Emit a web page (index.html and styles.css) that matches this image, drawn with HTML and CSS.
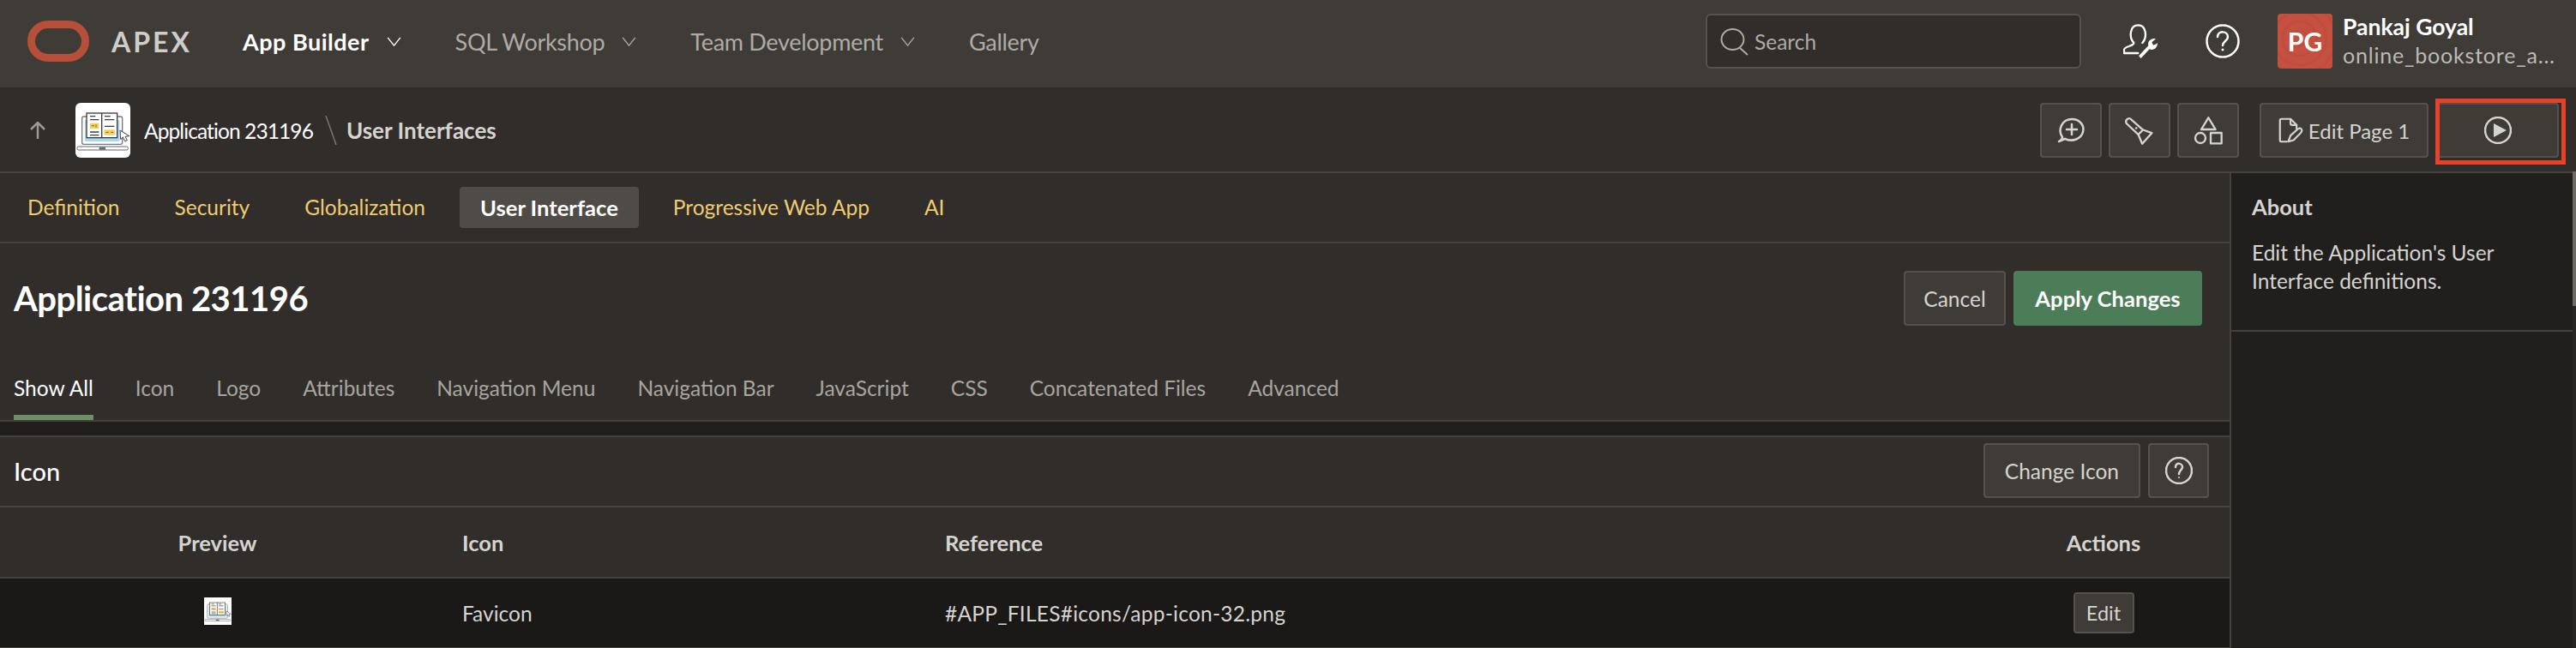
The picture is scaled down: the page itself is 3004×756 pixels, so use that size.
FILE: index.html
```html
<!DOCTYPE html>
<html lang="en">
<head>
    <meta charset="UTF-8">
    <title>User Interfaces</title>
    <link rel="stylesheet" href="styles.css">
</head>
<body>
<svg class="defs" width="0" height="0">
    <symbol id="appIcon" viewBox="264 360 192 192">
        <rect x="287" y="408" width="141" height="97" rx="6" fill="#fff" stroke="#77787a" stroke-width="4"/>
        <rect x="297" y="420" width="121" height="75" fill="#a9d8f3"/>
        <rect x="303" y="396" width="107" height="86" fill="#fff" stroke="#3c3d40" stroke-width="4"/>
        <path d="M356 396V482" stroke="#3c3d40" stroke-width="4"/>
        <path d="M315 407H334M315 419H346M315 462H346M315 473H346M366 407H386M366 419H400M366 442H400" stroke="#3c3d40" stroke-width="4"/>
        <rect x="315" y="431" width="31" height="19" fill="#f8cf5e"/>
        <rect x="364" y="454" width="38" height="19" fill="#f8cf5e"/>
        <path d="M320 440H330M336 436V446M370 463H380M388 463H396" stroke="#77693a" stroke-width="3"/>
        <rect x="270" y="513" width="178" height="12" rx="5" fill="#fff" stroke="#66676a" stroke-width="3"/>
        <rect x="347" y="515" width="22" height="9" fill="#66676a"/>
        <path d="M420 456L452 476L438 478L445 491L437 494L430 480L422 488Z" fill="#fff" stroke="#3c3d40" stroke-width="3"/>
    </symbol>
</svg>

<header class="topbar">
    <svg class="logo" viewBox="0 0 72 48"><rect x="4.500" y="4.500" width="63" height="39" rx="19.500" fill="none" stroke="#b84f3a" stroke-width="9"/></svg>
    <span class="brand">APEX</span>
    <nav class="topnav">
        <a class="topnav-item active">App Builder <svg class="chevron" viewBox="0 0 18 12"><path d="M1 1L9 11L17 1"/></svg></a>
        <a class="topnav-item">SQL Workshop <svg class="chevron" viewBox="0 0 18 12"><path d="M1 1L9 11L17 1"/></svg></a>
        <a class="topnav-item">Team Development <svg class="chevron" viewBox="0 0 18 12"><path d="M1 1L9 11L17 1"/></svg></a>
        <a class="topnav-item">Gallery</a>
    </nav>
    <div class="search">
        <svg class="search-icon" viewBox="0 0 33 32"><ellipse cx="14.500" cy="13" rx="13" ry="12"/><path d="M23 23L32 31"/></svg>
        <span>Search</span>
    </div>
    <svg class="top-icon admin" viewBox="0 0 120 120">
        <path d="M37 66C20 48 22 4 52 4C82 4 84 48 67 66M37 66C37 78 4 78 3 90V102H52"/>
        <path class="solid" d="M54 112L88 76C84 60 98 48 114 52L100 64L105 74L116 70L120 66C120 84 106 94 92 88L62 120Z"/>
    </svg>
    <svg class="top-icon help" viewBox="0 0 40 40">
        <circle cx="20" cy="20" r="18.500"/>
        <path d="M14 15C14 7 26 8 26 15C26 20 20 20 20 25"/>
        <circle class="dot" cx="20" cy="30" r="1.500"/>
    </svg>
    <div class="avatar">PG</div>
    <div class="user">
        <div class="user-name">Pankaj Goyal</div>
        <div class="user-app">online_bookstore_a...</div>
    </div>
</header>

<section class="crumbbar">
    <svg class="up-arrow" viewBox="0 0 18 20"><path d="M9 20V2M1 9L9 1L17 9"/></svg>
    <svg class="app-icon"><use href="#appIcon"/></svg>
    <span class="crumb">Application 231196</span>
    <svg class="crumb-sep" viewBox="0 0 14 34"><path d="M1 0L13 34"/></svg>
    <span class="crumb-current">User Interfaces</span>
    <div class="crumb-actions">
        <button class="btn btn-icon">
            <svg class="ico ico-comment" viewBox="0 0 34 30"><path d="M7 23C1 14 7 2 18 2C28 2 33 10 31 17C29 25 19 29 10 25L3 28C5 27 7 25 7 23Z"/><path d="M18 8V20M12 14H24"/></svg>
        </button>
        <button class="btn btn-icon">
            <svg class="ico ico-wide ico-torch" viewBox="110 370 115 110"><path d="M120 396Q118 386 128 382Q134 380 138 385L180 422L211 433L177 471L163 438L122 400Z"/><path d="M180 422L163 438"/><circle class="dot" cx="156" cy="416" r="4"/></svg>
        </button>
        <button class="btn btn-icon">
            <svg class="ico ico-wide ico-shapes" viewBox="355 375 105 102"><path d="M407 382L382 423H432Z"/><circle cx="379" cy="453" r="18"/><rect x="415" y="435" width="38" height="37"/></svg>
        </button>
        <button class="btn btn-edit">
            <svg class="ico ico-doc" viewBox="0 0 34 32"><path d="M11 31H4Q2 31 2 29V3Q2 1 4 1H16L24 9V14"/><path d="M16 2V7Q16 9 18 9H23"/><path d="M13 31L16 23L26 14Q30 12 31 16Q31 18 29 20L20 29Z"/></svg>
            Edit Page 1
        </button>
        <button class="btn btn-run">
            <svg class="ico ico-run" viewBox="0 0 32 32"><circle cx="16" cy="16" r="15"/><path class="solid" d="M11 8L26 16L11 24Z"/></svg>
        </button>
    </div>
    <div class="highlight"></div>
</section>

<div class="workspace">
    <main class="content">
        <nav class="tabs">
            <a class="tab">Definition</a>
            <a class="tab">Security</a>
            <a class="tab">Globalization</a>
            <a class="tab active">User Interface</a>
            <a class="tab">Progressive Web App</a>
            <a class="tab">AI</a>
        </nav>
        <div class="titlebar">
            <h1>Application 231196</h1>
            <div class="title-actions">
                <button class="btn btn-text btn-cancel">Cancel</button>
                <button class="btn btn-primary">Apply Changes</button>
            </div>
        </div>
        <nav class="subtabs">
            <a class="subtab active">Show All</a>
            <a class="subtab">Icon</a>
            <a class="subtab">Logo</a>
            <a class="subtab">Attributes</a>
            <a class="subtab">Navigation Menu</a>
            <a class="subtab">Navigation Bar</a>
            <a class="subtab">JavaScript</a>
            <a class="subtab">CSS</a>
            <a class="subtab">Concatenated Files</a>
            <a class="subtab">Advanced</a>
        </nav>
        <section class="region">
            <div class="region-head">
                <h2>Icon</h2>
                <button class="btn btn-text">Change Icon</button>
                <button class="btn btn-help">
                    <svg class="ico ico-help" viewBox="0 0 32 32"><circle cx="16" cy="16" r="15"/><path d="M12 12C12 6 20 7 20 12C20 15 16 16 16 20"/><circle class="dot" cx="16" cy="24" r="1"/></svg>
                </button>
            </div>
            <table class="report">
                <thead>
                <tr>
                    <th class="col-preview">Preview</th>
                    <th class="col-icon">Icon</th>
                    <th class="col-ref">Reference</th>
                    <th class="col-actions">Actions</th>
                </tr>
                </thead>
                <tbody>
                <tr>
                    <td class="col-preview"><svg class="favicon"><use href="#appIcon"/></svg></td>
                    <td class="col-icon">Favicon</td>
                    <td class="col-ref">#APP_FILES#icons/app-icon-32.png</td>
                    <td class="col-actions"><button class="btn btn-small">Edit</button></td>
                </tr>
                </tbody>
            </table>
        </section>
    </main>
    <aside class="about">
        <div class="about-box">
            <h3>About</h3>
            <p>Edit the Application's User Interface definitions.</p>
        </div>
    </aside>
</div>
</body>
</html>
```

FILE: styles.css
```css
* {
    box-sizing: border-box;
}
html, body {
    margin: 0;
    height: 100%;
}
body {
    width: 3004px;
    height: 756px;
    overflow: hidden;
    background-color: #201f1d;
    color: #d6d4d0;
    font-family: Lato, "Noto Sans", sans-serif;
    font-size: 24.500px;
}
.defs {
    display: block;
}
h1, h2, h3, p {
    margin: 0;
}
svg {
    display: block;
    flex: none;
}
.ico path, .ico circle, .ico rect, .top-icon path, .top-icon circle {
    fill: none;
    stroke: currentColor;
    stroke-width: 2.500;
    stroke-linejoin: round;
    stroke-linecap: round;
}
.ico .dot, .top-icon .dot {
    fill: currentColor;
    stroke: none;
}
.top-icon path.solid {
    fill: currentColor;
    stroke: none;
}

/* top bar */
.topbar {
    display: flex;
    align-items: center;
    height: 102px;
    padding: 0 0 6px 32px;
    background-color: #3f3c37;
}
.logo {
    width: 72px;
    height: 48px;
}
.brand {
    margin-left: 26px;
    width: 153px;
    font-size: 32px;
    font-weight: 700;
    letter-spacing: 3px;
    color: #cfcdc9;
}
.topnav {
    display: flex;
    gap: 63px;
    width: 1706px;
    font-size: 27px;
    letter-spacing: -0.300px;
}
.topnav-item {
    display: flex;
    align-items: center;
    gap: 20px;
    color: #aeaba6;
    white-space: nowrap;
}
.topnav-item.active {
    font-weight: 700;
    letter-spacing: 0.500px;
    color: #fff;
}
.chevron {
    width: 17px;
    height: 11px;
    fill: none;
    stroke: currentColor;
    stroke-width: 1.500;
}
.search {
    display: flex;
    align-items: center;
    gap: 7px;
    width: 438px;
    height: 64px;
    padding-left: 15px;
    background-color: #312d2a;
    border: 2px solid #55524d;
    border-radius: 6px;
    color: #aeaba6;
}
.search-icon {
    width: 33px;
    height: 32px;
    margin-top: 2px;
    fill: none;
    stroke: #aeaba6;
    stroke-width: 2;
}
.top-icon {
    width: 40px;
    height: 40px;
    color: #fff;
}
.admin {
    margin-left: 49px;
}
.admin path {
    stroke-width: 7;
}
.help {
    margin-left: 56px;
}
.avatar {
    display: flex;
    align-items: center;
    justify-content: center;
    width: 64px;
    height: 64px;
    margin-left: 44px;
    border-radius: 4px;
    background: repeating-radial-gradient(circle at 40% 45%, #c4503f 0, #c4503f 7px, #bd4c3e 9px, #c4503f 11px);
    color: #fff;
    font-weight: 700;
    font-size: 30px;
}
.user {
    margin-left: 12px;
    white-space: nowrap;
}
.user-name {
    font-size: 26.500px;
    font-weight: 700;
    color: #fff;
    line-height: 33px;
}
.user-app {
    color: #bdbab6;
    line-height: 33px;
    font-size: 25px;
    letter-spacing: 0.800px;
}

/* breadcrumb bar */
.crumbbar {
    position: relative;
    display: flex;
    align-items: center;
    height: 100px;
    padding: 2px 20px 0 35px;
    background-color: #312d2a;
    border-bottom: 2px solid #45423d;
}
.up-arrow {
    width: 18px;
    height: 20px;
    fill: none;
    stroke: #9c9995;
    stroke-width: 2.500;
}
.app-icon {
    width: 64px;
    height: 64px;
    margin-left: 35px;
    background-color: #fff;
    border-radius: 6px;
}
.crumb {
    margin-left: 16px;
    color: #fff;
    letter-spacing: -0.900px;
}
.crumb-sep {
    width: 14px;
    height: 34px;
    margin: 0 11px 0 14px;
    fill: none;
    stroke: #7a7773;
    stroke-width: 1.500;
}
.crumb-current {
    font-size: 26px;
    font-weight: 700;
    color: #d6d4d0;
}
.crumb-actions {
    display: flex;
    margin-left: auto;
}
.btn {
    display: flex;
    align-items: center;
    justify-content: center;
    height: 64px;
    padding: 0;
    background-color: #3f3c37;
    border: 2px solid #55524d;
    border-radius: 4px;
    color: #d6d4d0;
    font: inherit;
    white-space: nowrap;
}
.btn-icon {
    width: 72px;
    margin-right: 8px;
}
.btn-icon:nth-child(3) {
    margin-right: 24px;
}
.ico-comment {
    width: 34px;
    height: 30px;
}
.ico-wide path, .ico-wide circle, .ico-wide rect {
    stroke-width: 7;
}
.ico-wide .dot {
    stroke: none;
}
.ico-torch {
    width: 38px;
    height: 37px;
}
.ico-shapes {
    width: 35px;
    height: 34px;
}
.btn-edit {
    width: 197px;
    gap: 5px;
    margin-right: 10px;
    font-size: 24px;
}
.ico-doc {
    width: 30px;
    height: 30px;
}
.btn-run {
    width: 142px;
}
.ico-run {
    width: 32px;
    height: 32px;
}
.ico-run .solid {
    fill: currentColor;
    stroke: none;
}
.highlight {
    position: absolute;
    top: 13px;
    left: 2840px;
    width: 152px;
    height: 77px;
    border: 5px solid #e8412a;
}

/* main area */
.workspace {
    display: flex;
    height: 554px;
}
.content {
    width: 2602px;
    border-right: 2px solid #45423d;
}
.tabs {
    display: flex;
    align-items: center;
    gap: 16px;
    height: 82px;
    padding-left: 8px;
    background-color: #312d2a;
    border-bottom: 2px solid #45423d;
}
.tab {
    padding: 0 24px;
    height: 48px;
    line-height: 48px;
    border-radius: 4px;
    color: #f0cc71;
    white-space: nowrap;
}
.tab.active {
    background-color: #4f4b47;
    font-size: 25.600px;
    font-weight: 700;
    color: #fff;
}
.titlebar {
    display: flex;
    align-items: center;
    justify-content: space-between;
    height: 130px;
    padding: 0 32px 2px 16px;
    background-color: #312d2a;
}
h1 {
    font-size: 40px;
    font-weight: 700;
    letter-spacing: -0.500px;
    color: #fff;
}
.title-actions {
    display: flex;
    gap: 9px;
}
.btn-text {
    padding: 0 23px;
}
.btn-cancel {
    width: 119px;
    padding: 0;
}
.btn-primary {
    width: 220px;
    background-color: #4d7c58;
    border: none;
    font-size: 25.600px;
    font-weight: 700;
    color: #fff;
}
.subtabs {
    display: flex;
    gap: 49px;
    height: 78px;
    padding-left: 16px;
    background-color: #312d2a;
    border-bottom: 2px solid #45423d;
}
.subtab {
    height: 76px;
    padding-top: 24px;
    border-bottom: 6px solid transparent;
    color: #a8a5a0;
    white-space: nowrap;
}
.subtab.active {
    border-bottom-color: #6f8f68;
    color: #fff;
}
.region {
    margin-top: 16px;
    background-color: #312d2a;
    border-top: 2px solid #45423d;
}
.region-head {
    display: flex;
    align-items: center;
    height: 82px;
    padding: 0 24px 2px 16px;
    border-bottom: 2px solid #45423d;
}
h2 {
    font-size: 29px;
    font-weight: 500;
    color: #fff;
    margin-right: auto;
}
.btn-help {
    width: 71px;
    margin-left: 9px;
}
.ico-help {
    width: 32px;
    height: 32px;
}
.report {
    width: 100%;
    border-collapse: collapse;
    table-layout: fixed;
}
.report th {
    height: 82px;
    padding: 0;
    border-bottom: 2px solid #45423d;
    font-size: 25.500px;
    font-weight: 700;
    color: #d6d4d0;
    text-align: left;
}
.report td {
    height: 82px;
    padding: 0;
    background-color: #1a1917;
    border-bottom: 2px solid #45423d;
    color: #d6d4d0;
}
.report .col-preview {
    width: 507px;
    text-align: center;
}
.report .col-icon {
    width: 563px;
    padding-left: 32px;
}
.report .col-ref {
    padding-left: 32px;
}
.report td.col-ref {
    letter-spacing: 0.250px;
}
.report .col-actions {
    width: 294px;
    text-align: center;
}
.favicon {
    width: 32px;
    height: 32px;
    margin: 0 auto 4px;
    background-color: #fff;
    filter: blur(0.600px);
}
.btn-small {
    width: 71px;
    height: 48px;
    margin: 0 auto;
    font-size: 23.500px;
}

/* about panel */
.about {
    position: relative;
    flex: 1;
    background-color: #201f1d;
    border-right: 4px solid #272624;
}
.about::after {
    content: "";
    position: absolute;
    top: -2px;
    right: -4px;
    width: 4px;
    height: 157px;
    background-color: #6e6b67;
}
.about-box {
    height: 185px;
    padding: 24px 24px 0;
    border-bottom: 2px solid #45423d;
}
h3 {
    font-size: 25.500px;
    font-weight: 700;
    margin-bottom: 22px;
}
.about p {
    line-height: 33px;
}
```
